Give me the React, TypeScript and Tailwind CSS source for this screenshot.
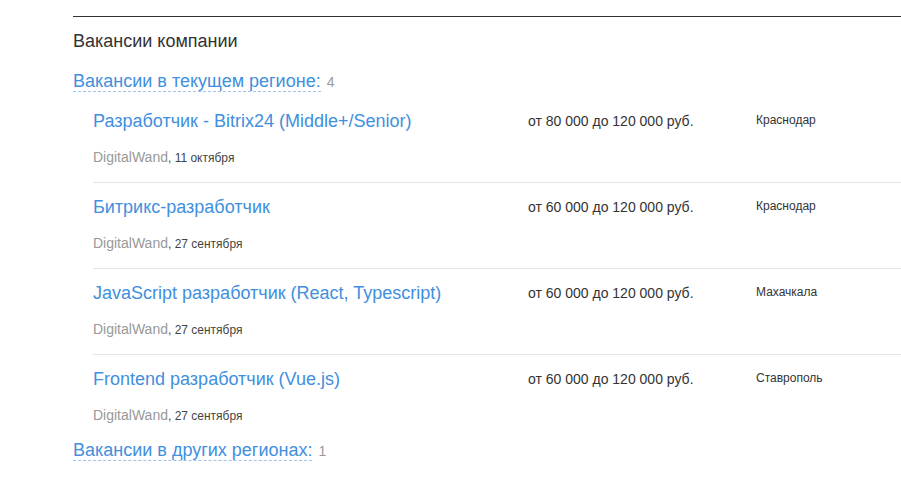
import React from "react";

const jobs = [
  { title: "Разработчик - Bitrix24 (Middle+/Senior)", salary: "от 80 000 до 120 000 руб.", city: "Краснодар", date: "11 октября" },
  { title: "Битрикс-разработчик", salary: "от 60 000 до 120 000 руб.", city: "Краснодар", date: "27 сентября" },
  { title: "JavaScript разработчик (React, Typescript)", salary: "от 60 000 до 120 000 руб.", city: "Махачкала", date: "27 сентября" },
  { title: "Frontend разработчик (Vue.js)", salary: "от 60 000 до 120 000 руб.", city: "Ставрополь", date: "27 сентября" },
];

export default function App() {
  return (
    <div className="w-[901px] h-[494px] bg-white overflow-hidden" style={{ fontFamily: '"Liberation Sans", Arial, sans-serif' }}>
      <div className="ml-[73px] pt-[16px]">
        <div className="border-t border-[#333333]" />
        <div className="mt-[12px] text-[18px] leading-[24px] text-[#333333]">Вакансии компании</div>
        <div className="mt-[16px] text-[18px] leading-[24px]">
          <span className="text-[#418fde] border-b border-dashed border-[#9cc5ee]">Вакансии в текущем регионе:</span>
          <span className="ml-[6px] text-[14px] text-[#999999]">4</span>
        </div>
        <div className="mt-[3px] ml-[20px]">
          {jobs.map((j, i) => (
            <div key={i} className={`flex pt-[12px] ${i > 0 ? "border-t border-[#e5e5e5]" : ""} ${i < jobs.length - 1 ? "pb-[15px]" : ""}`}>
              <div className="w-[435px] shrink-0">
                <div className="h-[24px] text-[18px] leading-[24px] text-[#418fde] whitespace-nowrap">{j.title}</div>
                <div className="mt-[14px] h-[20px] flex items-baseline text-[14px] leading-[20px] whitespace-nowrap">
                  <span className="text-[#999999]">DigitalWand</span>
                  <span className="text-[12px] text-[#444444]">, {j.date}</span>
                </div>
              </div>
              <div className="w-[228px] shrink-0 text-[14px] leading-[24px] text-[#333333] whitespace-nowrap">{j.salary}</div>
              <div className="text-[12px] leading-[20px] text-[#333333] pt-[1px] whitespace-nowrap">{j.city}</div>
            </div>
          ))}
        </div>
        <div className="mt-[13px] text-[18px] leading-[24px]">
          <span className="text-[#418fde] border-b border-dashed border-[#9cc5ee]">Вакансии в других регионах:</span>
          <span className="ml-[6px] text-[14px] text-[#999999]">1</span>
        </div>
      </div>
    </div>
  );
}
